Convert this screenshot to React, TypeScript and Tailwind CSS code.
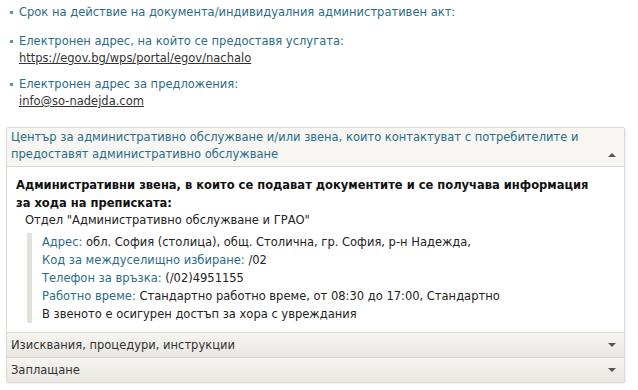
import React from "react";

function Bullet() {
  return <span className="mt-[7px] mr-[6px] h-[3px] w-[3px] shrink-0 bg-[#5b95a9]" />;
}

function Caret({ up }: { up?: boolean }) {
  return (
    <svg width="8" height="4" viewBox="0 0 8 4" className="shrink-0">
      {up ? <path d="M0 4 L4 0 L8 4 Z" fill="#555" /> : <path d="M0 0 L8 0 L4 4 Z" fill="#555" />}
    </svg>
  );
}

export default function App() {
  return (
    <div className="h-[390px] w-[638px] overflow-hidden bg-white font-['DejaVu_Sans',Verdana,sans-serif] text-[11.5px] leading-[17px] text-[#222]">
      <div className="flex flex-col pl-[10px] pt-[4px]">
        <div className="mb-[12px] flex items-start text-[#2a6d88]">
          <Bullet />
          <span>Срок на действие на документа/индивидуалния административен акт:</span>
        </div>
        <div className="mb-[9px] flex items-start">
          <Bullet />
          <div className="flex flex-col">
            <span className="text-[#2a6d88]">Електронен адрес, на който се предоставя услугата:</span>
            <a className="text-[#333] underline">https://egov.bg/wps/portal/egov/nachalo</a>
          </div>
        </div>
        <div className="flex items-start">
          <Bullet />
          <div className="flex flex-col">
            <span className="text-[#2a6d88]">Електронен адрес за предложения:</span>
            <a className="text-[#333] underline">info@so-nadejda.com</a>
          </div>
        </div>
      </div>

      <div className="ml-[6px] mt-[17px] w-[619px] rounded-[2px] border border-[#dcdad3] shadow-[1px_1px_2px_rgba(0,0,0,0.08)]">
        <div className="flex items-end justify-between border-b border-[#d8d6cf] bg-[#f7f6f2] pb-[3px] pl-[4px] pr-[8px] pt-[1px] text-[#2a6d88]">
          <span>
            Център за административно обслужване и/или звена, които контактуват с потребителите и
            <br />
            предоставят административно обслужване
          </span>
          <span className="mb-[6px]"><Caret up /></span>
        </div>
        <div className="bg-white pb-[9px] pl-[9px] pt-[9px]">
          <div className="whitespace-nowrap font-bold leading-[18px] text-[#111]">
            Административни звена, в които се подават документите и се получава информация
            <br />
            за хода на преписката:
          </div>
          <div className="pl-[9px] leading-[16px]">Отдел "Административно обслужване и ГРАО"</div>
          <div className="ml-[11px] mt-[5px] border-l-[5px] border-[#e3e1dc] pl-[10px] leading-[18px]">
            <div>
              <span className="text-[#2a6d88]">Адрес:</span> обл. София (столица), общ. Столична, гр. София, р-н Надежда,
            </div>
            <div>
              <span className="text-[#2a6d88]">Код за междуселищно избиране:</span> /02
            </div>
            <div>
              <span className="text-[#2a6d88]">Телефон за връзка:</span> (/02)4951155
            </div>
            <div>
              <span className="text-[#2a6d88]">Работно време:</span> Стандартно работно време, от 08:30 до 17:00, Стандартно
            </div>
            <div>В звеното е осигурен достъп за хора с увреждания</div>
          </div>
        </div>
        <div className="flex h-[25px] items-center justify-between border-t border-[#d8d6cf] bg-gradient-to-b from-[#f6f5f1] to-[#e9e7e1] pl-[4px] pr-[8px] text-[#333]">
          <span>Изисквания, процедури, инструкции</span>
          <Caret />
        </div>
        <div className="flex h-[25px] items-center justify-between border-t border-[#d8d6cf] bg-gradient-to-b from-[#f6f5f1] to-[#e9e7e1] pl-[4px] pr-[8px] text-[#333]">
          <span>Заплащане</span>
          <Caret />
        </div>
      </div>
    </div>
  );
}
